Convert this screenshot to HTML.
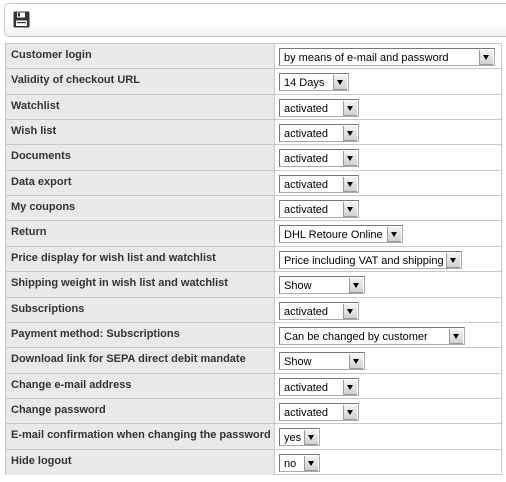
<!DOCTYPE html><html><head><style>
body{margin:0;width:506px;height:482px;background:#fff;font-family:"Liberation Sans",Arial,sans-serif;position:relative;overflow:hidden}
.tb{position:absolute;left:4px;top:3px;width:520px;height:32px;border:1px solid #c8c8c8;border-radius:5px;background:linear-gradient(#fff 60%,#eee)}
.tbl{position:absolute;left:5px;top:43px;width:495px;height:430px;border:1px solid #c8c8c8;background:#fff}
.r{position:absolute;left:0;width:495px;border-top:1px solid #c8c8c8}
.l{position:absolute;left:0;top:0;width:268px;height:100%;background:#e9e9e9;border-right:1px solid #c8c8c8}
.t{position:absolute;left:5px;top:5px;font-size:11px;font-weight:bold;color:#333}
.s{position:absolute;left:273px;top:4px;border:1px solid #777;border-right-color:#aaa;border-bottom-color:#aaa;background:#fff;font-size:11px;color:#000;line-height:18px;padding-left:4px;box-sizing:border-box;height:18px}
.s i{position:absolute;right:1px;top:1px;width:13px;height:14px;background:linear-gradient(#f4f4f4,#d0d0d0);border-left:1px solid #999;border-bottom:1px solid #999}
.s i:after{content:"";position:absolute;left:3px;top:5px;border-left:3.5px solid transparent;border-right:3.5px solid transparent;border-top:5px solid #000}
</style></head><body>
<div class="tb"><svg style="position:absolute;left:8px;top:7px" width="17" height="17" viewBox="0 0 17 17"><rect x="0.5" y="0.5" width="16" height="16" rx="1.5" fill="#333"/><rect x="4" y="1.5" width="8" height="5" fill="#fff"/><rect x="5" y="2" width="2" height="3.5" fill="#333"/><rect x="3" y="9.5" width="11" height="5.5" fill="#fff"/><rect x="4" y="11" width="9" height="1.2" fill="#333"/></svg></div>
<div class="tbl">
<div class="r" style="top:-1px;height:25px"><div class="l"></div><div class="t">Customer login</div><div class="s" style="width:216px">by means of e-mail and password<i></i></div></div>
<div class="r" style="top:24px;height:25px"><div class="l"></div><div class="t">Validity of checkout URL</div><div class="s" style="width:70px">14 Days<i></i></div></div>
<div class="r" style="top:50px;height:25px"><div class="l"></div><div class="t">Watchlist</div><div class="s" style="width:80px">activated<i></i></div></div>
<div class="r" style="top:75px;height:25px"><div class="l"></div><div class="t">Wish list</div><div class="s" style="width:80px">activated<i></i></div></div>
<div class="r" style="top:100px;height:25px"><div class="l"></div><div class="t">Documents</div><div class="s" style="width:80px">activated<i></i></div></div>
<div class="r" style="top:126px;height:25px"><div class="l"></div><div class="t">Data export</div><div class="s" style="width:80px">activated<i></i></div></div>
<div class="r" style="top:151px;height:25px"><div class="l"></div><div class="t">My coupons</div><div class="s" style="width:80px">activated<i></i></div></div>
<div class="r" style="top:176px;height:25px"><div class="l"></div><div class="t">Return</div><div class="s" style="width:124px">DHL Retoure Online<i></i></div></div>
<div class="r" style="top:202px;height:25px"><div class="l"></div><div class="t">Price display for wish list and watchlist</div><div class="s" style="width:183px">Price including VAT and shipping<i></i></div></div>
<div class="r" style="top:227px;height:25px"><div class="l"></div><div class="t">Shipping weight in wish list and watchlist</div><div class="s" style="width:86px">Show<i></i></div></div>
<div class="r" style="top:253px;height:25px"><div class="l"></div><div class="t">Subscriptions</div><div class="s" style="width:80px">activated<i></i></div></div>
<div class="r" style="top:278px;height:25px"><div class="l"></div><div class="t">Payment method: Subscriptions</div><div class="s" style="width:186px">Can be changed by customer<i></i></div></div>
<div class="r" style="top:303px;height:25px"><div class="l"></div><div class="t">Download link for SEPA direct debit mandate</div><div class="s" style="width:86px">Show<i></i></div></div>
<div class="r" style="top:329px;height:25px"><div class="l"></div><div class="t">Change e-mail address</div><div class="s" style="width:80px">activated<i></i></div></div>
<div class="r" style="top:354px;height:25px"><div class="l"></div><div class="t">Change password</div><div class="s" style="width:80px">activated<i></i></div></div>
<div class="r" style="top:379px;height:25px"><div class="l"></div><div class="t">E-mail confirmation when changing the password</div><div class="s" style="width:41px">yes<i></i></div></div>
<div class="r" style="top:405px;height:25px"><div class="l"></div><div class="t">Hide logout</div><div class="s" style="width:41px">no<i></i></div></div>
</div>
</body></html>
